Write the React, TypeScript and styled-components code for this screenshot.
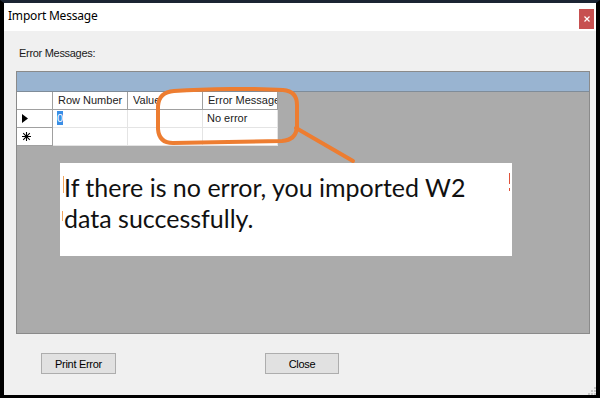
import React from 'react';
import styled, { createGlobalStyle } from 'styled-components';

const GlobalStyle = createGlobalStyle`
  html, body {
    margin: 0;
    padding: 0;
    background: #ffffff;
  }
  * {
    box-sizing: border-box;
  }
`;

const ui = `'Liberation Sans', Arial, sans-serif`;

const Page = styled.div`
  position: relative;
  width: 600px;
  height: 398px;
  overflow: hidden;
`;

const Window = styled.div`
  width: 600px;
  height: 398px;
  border: 4px solid #000000;
  border-top: 3px solid #1b2433;
  border-bottom-width: 3px;
  display: flex;
  flex-direction: column;
  background: #f0f0f0;
`;

const TitleBar = styled.div`
  height: 28px;
  flex: none;
  background: #ffffff;
  display: flex;
  justify-content: space-between;
  align-items: flex-start;
  padding-left: 4px;
  padding-right: 2px;
`;

const TitleText = styled.div`
  font-family: 'Noto Sans', 'Open Sans', sans-serif;
  font-size: 12px;
  line-height: 16px;
  margin-top: 5px;
  letter-spacing: -0.2px;
  color: #000000;
`;

const CloseButton = styled.div`
  width: 15px;
  height: 20px;
  margin-top: 6px;
  background: #c75050;
  display: flex;
  align-items: center;
  justify-content: center;
`;

const Body = styled.div`
  flex: 1;
  display: flex;
  flex-direction: column;
  padding: 16px 6px 0 12px;
`;

const Label = styled.div`
  font-family: ${ui};
  font-size: 11px;
  line-height: 13px;
  margin-left: 3px;
  letter-spacing: -0.3px;
  color: #1a1a1a;
`;

const GridView = styled.div`
  margin-top: 11px;
  height: 263px;
  border: 1px solid #8a8a8a;
  background: #ababab;
  display: flex;
  flex-direction: column;
`;

const Caption = styled.div`
  height: 20px;
  flex: none;
  background: #99b4d1;
  border-bottom: 1px solid #7f8c99;
`;

const Table = styled.div`
  display: grid;
  grid-template-columns: 36px 75px 75px 75px;
  grid-auto-rows: 18px;
  width: max-content;
`;

const HeaderCell = styled.div`
  background: #ffffff;
  border-right: 1px solid #a0a0a0;
  border-bottom: 1px solid #a0a0a0;
  font-family: ${ui};
  font-size: 11px;
  line-height: 17px;
  padding-left: 5px;
  color: #222222;
  white-space: nowrap;
  overflow: hidden;
`;

const HeaderText = styled.span`
  display: block;
  width: 100%;
  padding-right: 3px;
  overflow: hidden;
  text-overflow: clip;
`;

const RowHeader = styled.div`
  background: #ffffff;
  border-right: 1px solid #a0a0a0;
  border-bottom: 1px solid #a0a0a0;
  display: flex;
  align-items: center;
  padding-left: 5px;
`;

const Cell = styled.div`
  background: #ffffff;
  border-right: 1px solid #e4e4e4;
  border-bottom: 1px solid #e4e4e4;
  font-family: ${ui};
  font-size: 11px;
  line-height: 17px;
  padding-left: 4px;
  color: #1a1a1a;
  white-space: nowrap;
  overflow: hidden;
`;

const Selected = styled.span`
  background: #3a8ee6;
  color: #ffffff;
  padding: 1px 0;
`;

const ButtonRow = styled.div`
  display: flex;
  gap: 149px;
  margin-top: 19px;
  padding-left: 25px;
`;

const Button = styled.button<{ $w: number }>`
  width: ${(p) => p.$w}px;
  height: 21px;
  background: #e1e1e1;
  border: 1px solid #adadad;
  font-family: ${ui};
  font-size: 11px;
  letter-spacing: -0.3px;
  color: #000000;
  padding: 0;
`;

const Annotation = styled.svg`
  position: absolute;
  left: 0;
  top: 0;
  pointer-events: none;
`;

const Callout = styled.div`
  position: absolute;
  left: 60px;
  top: 163px;
  width: 452px;
  height: 93px;
  background: #ffffff;
  padding: 9px 0 0 4px;
  font-family: Lato, 'Open Sans', sans-serif;
  font-size: 25px;
  line-height: 31px;
  color: #111111;
`;

const Tick = styled.span<{ $color: string }>`
  position: absolute;
  width: 1px;
  background: ${(p) => p.$color};
`;

const Grip = styled.svg`
  position: absolute;
  right: 4px;
  bottom: 3px;
`;

export default function App() {
  return (
    <Page>
      <GlobalStyle />
      <Window>
        <TitleBar>
          <TitleText>Import Message</TitleText>
          <CloseButton>
            <svg width="6" height="6" viewBox="0 0 6 6">
              <path d="M0.5 0.5 L5.5 5.5 M5.5 0.5 L0.5 5.5" stroke="#ffffff" strokeWidth="1.2" />
            </svg>
          </CloseButton>
        </TitleBar>
        <Body>
          <Label>Error Messages:</Label>
          <GridView>
            <Caption />
            <Table>
              <HeaderCell />
              <HeaderCell><HeaderText>Row Number</HeaderText></HeaderCell>
              <HeaderCell><HeaderText>Value</HeaderText></HeaderCell>
              <HeaderCell><HeaderText>Error Message</HeaderText></HeaderCell>

              <RowHeader>
                <svg width="6" height="9" viewBox="0 0 6 9">
                  <path d="M0 0 L6 4.5 L0 9 Z" fill="#000000" />
                </svg>
              </RowHeader>
              <Cell><Selected>0</Selected></Cell>
              <Cell />
              <Cell>No error</Cell>

              <RowHeader>
                <svg width="9" height="9" viewBox="0 0 9 9">
                  <path d="M4.5 0 V9 M0 4.5 H9 M1.2 1.2 L7.8 7.8 M7.8 1.2 L1.2 7.8" stroke="#000000" strokeWidth="1.1" />
                </svg>
              </RowHeader>
              <Cell />
              <Cell />
              <Cell />
            </Table>
          </GridView>
          <ButtonRow>
            <Button $w={75}>Print Error</Button>
            <Button $w={74}>Close</Button>
          </ButtonRow>
        </Body>
      </Window>

      <Annotation width="600" height="398" viewBox="0 0 600 398">
        <path
          d="M174 91 C205 89 258 88 283 90 Q297 91 297 105 L297 127 Q296 140 282 141 L173 143 Q159 143 158 129 L158 106 Q159 92 174 91 Z"
          fill="none"
          stroke="#ed7d31"
          strokeWidth="4"
        />
        <path d="M296 128 L353 161" stroke="#ed7d31" strokeWidth="4" strokeLinecap="round" />
      </Annotation>

      <Callout>
        If there is no error, you imported W2
        <br />
        data successfully.
        <Tick $color="#f2a65e" style={{ left: 3, top: 13, height: 17 }} />
        <Tick $color="#f2a65e" style={{ left: 2, top: 48, height: 10 }} />
        <Tick $color="#e0523a" style={{ left: 449, top: 10, height: 11 }} />
        <Tick $color="#e0523a" style={{ left: 449, top: 25, height: 3 }} />
      </Callout>

      <Grip width="8" height="8" viewBox="0 0 8 8">
        <rect x="6" y="0" width="2" height="2" fill="#c8c8c8" />
        <rect x="3" y="3" width="2" height="2" fill="#c8c8c8" />
        <rect x="6" y="3" width="2" height="2" fill="#c8c8c8" />
        <rect x="0" y="6" width="2" height="2" fill="#c8c8c8" />
        <rect x="3" y="6" width="2" height="2" fill="#c8c8c8" />
        <rect x="6" y="6" width="2" height="2" fill="#c8c8c8" />
      </Grip>
    </Page>
  );
}
